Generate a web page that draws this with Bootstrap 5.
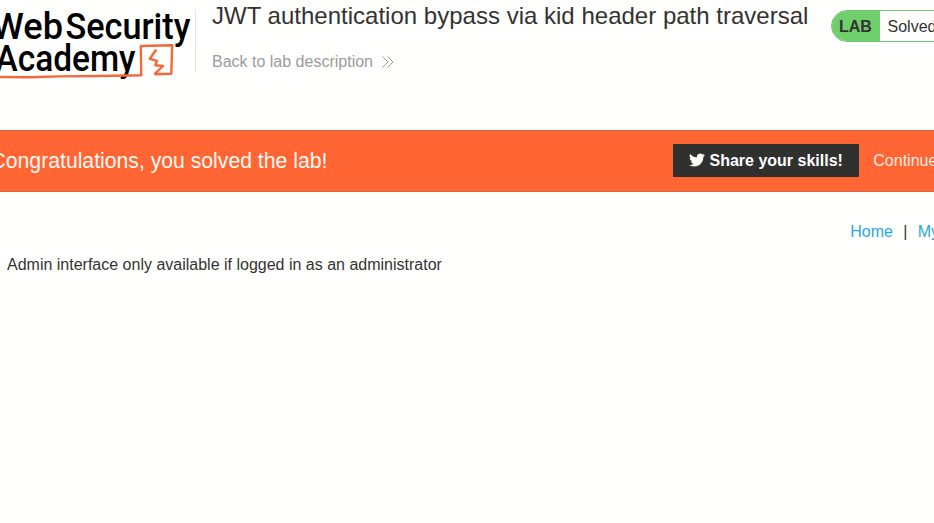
<!DOCTYPE html>
<html lang="en">
<head>
<meta charset="utf-8">
<title>JWT authentication bypass via kid header path traversal</title>
<meta name="viewport" content="width=device-width, initial-scale=1">
<link href="https://cdn.jsdelivr.net/npm/bootstrap@5.3.0/dist/css/bootstrap.min.css" rel="stylesheet">
<style>
body{font-family:"Liberation Sans",Arial,sans-serif;font-size:16px;line-height:24px;color:#333332;background:#fffffe;overflow:hidden;height:523px}
.lab-header{height:130px;padding-top:10px}
.logo-box{width:196px;height:62px;border-right:1px solid #e4e4e4;flex:none}
.logo-box svg{display:block;overflow:visible;margin-top:-10px}
.title-box{margin-left:16px;width:619px;flex:none}
.title-box h1{font-size:24px;line-height:28px;margin:-8px 0 0;font-weight:400;letter-spacing:.01px}
.back-link{color:#9b9b9b;margin-top:20px}
.back-link svg{margin-left:8px;margin-bottom:1px}
.status-pill{height:32px;width:140px;flex:none;border:1px solid #75c077;border-radius:16px;overflow:hidden;line-height:32px}
.status-tag{background:#6fcf6d;width:48px;padding-left:7px;font-weight:700}
.status-text{padding-left:7.5px;line-height:31px}
.solved-banner{height:62px;background:#ff6633;border-top:1px solid #d56645;border-bottom:1px solid #d56645;color:#fffaf4}
.solved-banner h4{font-size:21.2px;line-height:26px;font-weight:400;margin:0 0 0 -9.5px;width:682.5px;flex:none}
.share-btn{width:186px;height:33px;background:#30302f;color:#fff;font-weight:700;border:0;border-radius:0;padding:0 0 0 16px;margin-bottom:2px;flex:none;line-height:33px}
.share-btn:hover{background:#30302f;color:#fff}
.share-label{margin-left:4.5px}
.continue-link{margin-left:14.3px;color:#ffe9df}
.top-links{padding:28px 0 0 850.3px}
.top-links a{color:#29a7df}
.link-divider{padding:0 10.3px}
.message{padding:9px 0 0 7px;margin:0}
</style>
<script src="https://cdn.jsdelivr.net/npm/bootstrap@5.3.0/dist/js/bootstrap.bundle.min.js"></script>
</head>
<body>
<header class="lab-header d-flex align-items-start text-nowrap">
  <div class="logo-box">
    <svg width="196" height="84" viewBox="0 0 196 84" role="img" aria-label="Web Security Academy">
      <g font-family="Roboto, sans-serif" font-weight="500" font-size="37.5" fill="#000">
        <text x="-8" y="38.5" textLength="71" lengthAdjust="spacingAndGlyphs">Web</text>
        <text x="65.5" y="38.5" textLength="125" lengthAdjust="spacingAndGlyphs">Security</text>
        <text x="-4.5" y="71" textLength="140" lengthAdjust="spacingAndGlyphs">Academy</text>
      </g>
      <g fill="none" stroke="#f4683a" stroke-linejoin="round">
        <path d="M-2 77 L30 77.200 L60 76.400 L100 76 L141.200 75.300 L140.800 46 L172.200 45.200 L171.300 73.800 L154.500 74.200" stroke-width="2.400"/>
        <path d="M156.300 49.500 L149.800 58.800 L157 60.800 L155.300 65.300 L163 66 L154.500 74.200" stroke-width="2.400"/>
      </g>
    </svg>
  </div>
  <div class="title-box">
    <h1>JWT authentication bypass via kid header path traversal</h1>
    <div class="back-link d-flex align-items-center">Back to lab description
      <svg width="14" height="14" viewBox="0 0 14 14" fill="none" stroke="#9b9b9b" stroke-width="1"><path d="M1.500 1.500 L7 7 L1.500 12.500 M6.500 1.500 L12 7 L6.500 12.500"/></svg>
    </div>
  </div>
  <div class="status-pill d-flex">
    <span class="status-tag">LAB</span><span class="status-text">Solved</span>
  </div>
</header>
<section class="solved-banner d-flex align-items-center text-nowrap">
  <h4>Congratulations, you solved the lab!</h4>
  <button class="share-btn btn d-flex align-items-center" type="button">
    <svg width="16" height="16" viewBox="0 0 24 24" fill="#fff"><path d="M23.950 4.570a10 10 0 0 1-2.820.770 4.960 4.960 0 0 0 2.160-2.720c-.950.550-2 .950-3.130 1.180a4.920 4.920 0 0 0-8.380 4.480C7.690 8.090 4.070 6.130 1.640 3.160a4.820 4.820 0 0 0-.670 2.480c0 1.710.870 3.210 2.190 4.100a4.900 4.900 0 0 1-2.230-.620v.060a4.920 4.920 0 0 0 3.950 4.830 5 5 0 0 1-2.210.080 4.940 4.940 0 0 0 4.600 3.420A9.870 9.870 0 0 1 0 19.540a13.990 13.990 0 0 0 7.550 2.210c9.050 0 14-7.500 14-13.980 0-.210 0-.420-.020-.630a9.940 9.940 0 0 0 2.420-2.570z"/></svg>
    <span class="share-label">Share your skills!</span>
  </button>
  <span class="continue-link">Continue</span>
</section>
<main class="text-nowrap">
  <nav class="top-links d-flex">
    <a class="text-decoration-none" href="#">Home</a><span class="link-divider">|</span><a class="text-decoration-none" href="#">My</a>
  </nav>
  <p class="message">Admin interface only available if logged in as an administrator</p>
</main>
</body>
</html>
